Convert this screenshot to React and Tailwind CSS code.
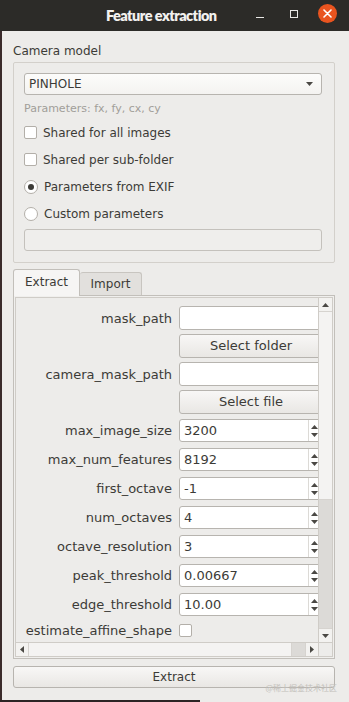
import React from "react";

const spinRows = [
  { label: "max_image_size", value: "3200" },
  { label: "max_num_features", value: "8192" },
  { label: "first_octave", value: "-1" },
  { label: "num_octaves", value: "4" },
  { label: "octave_resolution", value: "3" },
  { label: "peak_threshold", value: "0.00667" },
  { label: "edge_threshold", value: "10.00" },
];

function Tri({ dir = "down", className = "" }) {
  const d = {
    up: "M3.5 0L7 4H0z",
    down: "M0 0h7L3.5 4z",
    left: "M4 0v7L0 3.5z",
    right: "M0 0l4 3.5L0 7z",
  }[dir];
  const horiz = dir === "left" || dir === "right";
  return (
    <svg
      width={horiz ? 4 : 7}
      height={horiz ? 7 : 4}
      viewBox={horiz ? "0 0 4 7" : "0 0 7 4"}
      className={className}
    >
      <path d={d} fill="#4a4844" />
    </svg>
  );
}

function Checkbox() {
  return (
    <span className="block h-[13px] w-[13px] shrink-0 rounded-[2px] border border-[#b3afa9] bg-white" />
  );
}

function Radio({ checked }) {
  return (
    <span className="grid h-[14px] w-[14px] shrink-0 place-items-center rounded-full border border-[#b3afa9] bg-white">
      {checked && <span className="block h-[6px] w-[6px] rounded-full bg-[#3c3b37]" />}
    </span>
  );
}

function FormRow({ label, children, className = "" }) {
  return (
    <div className={`flex items-center ${className}`}>
      <span className="w-[156px] shrink-0 whitespace-nowrap pt-px text-right">{label}</span>
      <div className="ml-[7px] w-[144px] shrink-0">{children}</div>
    </div>
  );
}

function TextField() {
  return (
    <div className="h-[24px] rounded-[3px] border border-[#b7b4af] bg-white" />
  );
}

function PushButton({ children, className = "" }) {
  return (
    <div
      className={`flex items-center justify-center rounded-[3px] border border-[#b7b4af] bg-gradient-to-b from-[#f8f7f6] to-[#e9e7e4] ${className}`}
    >
      {children}
    </div>
  );
}

function SpinBox({ value }) {
  return (
    <div className="flex h-[23px] rounded-[3px] border border-[#b7b4af] bg-white">
      <span className="flex flex-1 items-center pl-[4px]">{value}</span>
      <div className="mr-[2px] flex w-[12px] flex-col items-center justify-center gap-[4px] border-l border-[#dcdad6]">
        <Tri dir="up" />
        <Tri dir="down" />
      </div>
    </div>
  );
}

export default function App() {
  return (
    <div className="flex h-[702px] w-[349px] flex-col overflow-hidden bg-[#edecea] font-['DejaVu_Sans',sans-serif] text-[12px] text-[#3c3b37]">
      <div className="flex h-[31px] shrink-0 items-center bg-[#2c2b28]">
        <span className="ml-[106px] w-[133px] whitespace-nowrap font-['Lato',sans-serif] text-[14.5px] font-extrabold tracking-[-0.55px] text-[#f2f1ef]">
          Feature extraction
        </span>
        <span className="ml-[17px] mt-[4px] block h-[1.5px] w-[8px] bg-[#e9e8e6]" />
        <span className="ml-[26px] mt-[-3px] block h-[8px] w-[8px] border-[1.5px] border-[#e9e8e6]" />
        <span className="ml-[20px] mt-[-4px] grid h-[19px] w-[19px] place-items-center rounded-full bg-[#e9541f]">
          <svg width="9" height="9" viewBox="0 0 9 9">
            <path d="M1 1l7 7M8 1l-7 7" stroke="#fff" strokeWidth="1.6" strokeLinecap="round" />
          </svg>
        </span>
      </div>

      <div className="relative flex flex-1 flex-col border-l-2 border-[#3a2b2b] pl-[11px] pt-[12px]">
        <div className="h-[17px] leading-[17px]">Camera model</div>

        <div className="mt-[2px] w-[322px] rounded-[2px] border border-[#d3d0cb] pb-[11px] pl-[10px] pr-[12px] pt-[10px]">
          <div className="flex h-[22px] items-center justify-between rounded-[3px] border border-[#b7b4af] bg-gradient-to-b from-[#fcfcfb] to-[#f4f3f1] pl-[4px] pr-[8px]">
            <span>PINHOLE</span>
            <Tri dir="down" />
          </div>
          <div className="mt-[7px] h-[13px] text-[11px] leading-[13px] text-[#a19e99]">
            Parameters: fx, fy, cx, cy
          </div>
          <div className="mt-[4px]">
            <div className="flex h-[27px] items-center gap-[6px]">
              <Checkbox />
              <span>Shared for all images</span>
            </div>
            <div className="flex h-[27px] items-center gap-[6px]">
              <Checkbox />
              <span>Shared per sub-folder</span>
            </div>
            <div className="flex h-[27px] items-center gap-[6px]">
              <Radio checked />
              <span>Parameters from EXIF</span>
            </div>
            <div className="flex h-[27px] items-center gap-[6px]">
              <Radio />
              <span>Custom parameters</span>
            </div>
          </div>
          <div className="mt-[2px] h-[22px] rounded-[3px] border border-[#c4c1bc] bg-[#efeeec]" />
        </div>

        <div className="relative z-10 -mb-px mt-[6px] flex h-[27px] items-end">
          <div className="flex h-[27px] w-[67px] items-center justify-center rounded-t-[3px] border border-b-0 border-[#c2bfba] bg-[#f6f5f4] pb-[2px]">
            Extract
          </div>
          <div className="mb-px flex h-[23px] w-[62px] items-center justify-center rounded-t-[3px] border border-b-0 border-l-0 border-[#c8c5c0] bg-[#e2e0dd]">
            Import
          </div>
        </div>

        <div className="w-[322px] border border-[#c2bfba] bg-[#f0efed] p-px">
          <div className="border border-[#cfccc7]">
            <div className="flex">
              <div className="h-[344px] w-[302px] overflow-hidden bg-[#edecea] pt-[8px] text-[13px]">
                <FormRow label="mask_path">
                  <TextField />
                </FormRow>
                <FormRow label="" className="mt-[4px]">
                  <PushButton className="h-[24px]">Select folder</PushButton>
                </FormRow>
                <FormRow label="camera_mask_path" className="mt-[4px]">
                  <TextField />
                </FormRow>
                <FormRow label="" className="mt-[4px]">
                  <PushButton className="h-[24px]">Select file</PushButton>
                </FormRow>
                {spinRows.map((row, i) => (
                  <FormRow
                    key={row.label}
                    label={row.label}
                    className={i === 0 ? "mt-[5px]" : "mt-[6px]"}
                  >
                    <SpinBox value={row.value} />
                  </FormRow>
                ))}
                <FormRow label="estimate_affine_shape" className="mt-[7px] h-[14px]">
                  <Checkbox />
                </FormRow>
              </div>
              <div className="flex w-[14px] flex-col border-l border-[#cfccc7]">
                <div className="flex h-[14px] items-center justify-center border-b border-[#d6d3cf] bg-[#f3f2f0]">
                  <Tri dir="up" />
                </div>
                <div className="h-[188px] border-b border-[#d6d3cf] bg-[#f4f3f2]" />
                <div className="flex-1 bg-[#dcdad7]" />
                <div className="flex h-[14px] items-center justify-center border-t border-[#d6d3cf] bg-[#f3f2f0]">
                  <Tri dir="down" />
                </div>
              </div>
            </div>
            <div className="flex h-[14px] border-t border-[#cfccc7]">
              <div className="flex w-[13px] items-center justify-center border-r border-[#d6d3cf] bg-[#f3f2f0]">
                <Tri dir="left" />
              </div>
              <div className="w-[263px] border-r border-[#d6d3cf] bg-[#f4f3f2]" />
              <div className="w-[13px] bg-[#dcdad7]" />
              <div className="flex w-[13px] items-center justify-center border-l border-[#d6d3cf] bg-[#f3f2f0]">
                <Tri dir="right" />
              </div>
              <div className="flex-1 border-l border-[#cfccc7] bg-[#edecea]" />
            </div>
          </div>
        </div>

        <PushButton className="mt-[7px] h-[22px] w-[322px]">Extract</PushButton>

        <span className="absolute bottom-[9px] right-[12px] font-['Noto_Sans_CJK_SC',sans-serif] text-[8px] leading-[10px] text-[#c2bfba]">
          @稀土掘金技术社区
        </span>

        <div className="mt-auto flex h-[2px] -ml-[13px]">
          <div className="w-[200px] bg-[#2c2424]" />
        </div>
      </div>
    </div>
  );
}
